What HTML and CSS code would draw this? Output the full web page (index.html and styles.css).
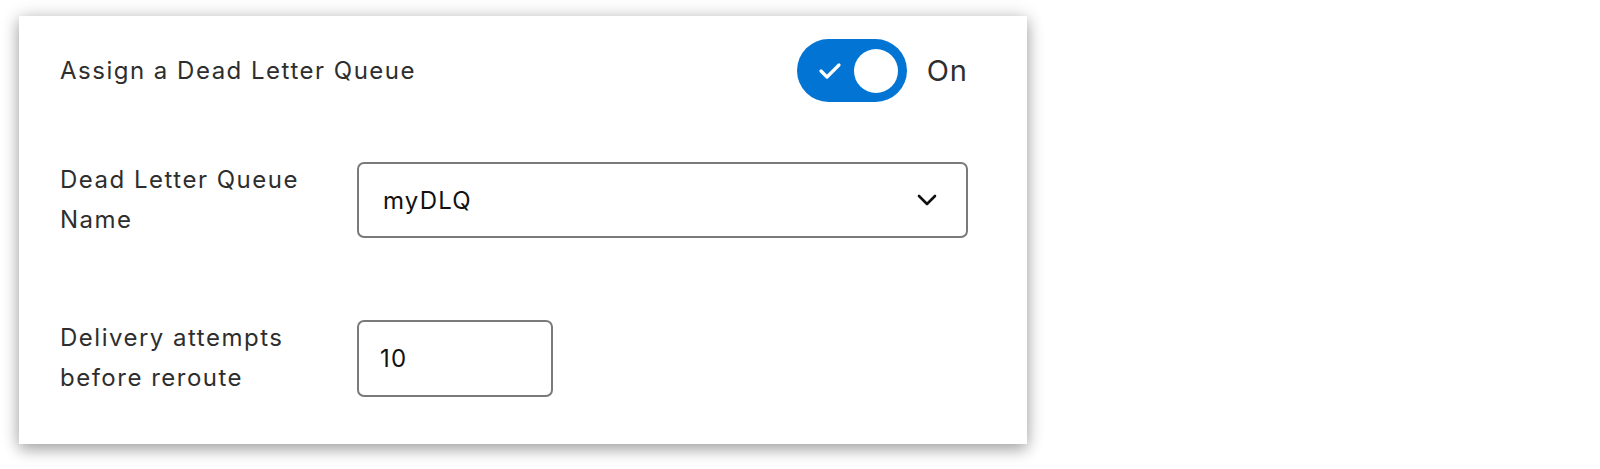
FILE: index.html
```html
<!DOCTYPE html>
<html>
<head>
<meta charset="utf-8">
<link rel="stylesheet" href="styles.css">
</head>
<body>
<div class="card">
  <div class="row row-title">
    <div class="title">Assign a Dead Letter Queue</div>
    <div class="switch-group">
      <div class="switch">
        <svg class="check" width="24" height="18" viewBox="0 0 24 18"><polyline points="3,9 9,15 21,3" fill="none" stroke="#fff" stroke-width="3.2" stroke-linecap="round" stroke-linejoin="round"/></svg>
        <div class="knob"></div>
      </div>
      <span class="state">On</span>
    </div>
  </div>
  <div class="row row-select">
    <div class="label">Dead Letter Queue<br>Name</div>
    <div class="select">
      <span class="value">myDLQ</span>
      <svg class="chev" width="20" height="12" viewBox="0 0 20 12"><polyline points="2,2 10,10 18,2" fill="none" stroke="#111" stroke-width="2.6" stroke-linecap="round" stroke-linejoin="round"/></svg>
    </div>
  </div>
  <div class="row row-number">
    <div class="label">Delivery attempts<br>before reroute</div>
    <div class="number"><span class="value">10</span></div>
  </div>
</div>
</body>
</html>
```
FILE: styles.css
```css
html, body {
  margin: 0;
  padding: 0;
  background: #ffffff;
}
body {
  font-family: Inter, "Noto Sans", "Liberation Sans", sans-serif;
  color: #2e2e2e;
  min-height: 469px;
  padding-top: 16px;
  box-sizing: border-box;
}
.card {
  margin: 0 0 0 19px;
  width: 1008px;
  height: 428px;
  box-sizing: border-box;
  padding: 23px 59px 0 41px;
  background: #ffffff;
  box-shadow: 0 6px 14px rgba(0, 0, 0, 0.28), 0 0 18px rgba(0, 0, 0, 0.16);
}
.row {
  display: flex;
  align-items: center;
}
.row-title {
  justify-content: space-between;
  height: 63px;
}
.title {
  font-size: 24px;
  letter-spacing: 1.5px;
}
.switch-group {
  display: flex;
  align-items: center;
  gap: 20px;
}
.switch {
  width: 110px;
  height: 63px;
  border-radius: 32px;
  background: #0174d4;
  display: flex;
  align-items: center;
  justify-content: flex-end;
  padding-right: 9px;
  box-sizing: border-box;
  gap: 12px;
}
.check {
  display: block;
}
.knob {
  width: 44px;
  height: 44px;
  border-radius: 50%;
  background: #ffffff;
}
.state {
  font-size: 29px;
  letter-spacing: 1px;
  color: #2e2e2e;
}
.row-select {
  margin-top: 58px;
  height: 80px;
}
.row-number {
  margin-top: 78px;
  height: 80px;
}
.label {
  width: 297px;
  flex: none;
  font-size: 24px;
  letter-spacing: 1.5px;
  line-height: 40px;
}
.select {
  width: 612px;
  height: 76px;
  box-sizing: border-box;
  border: 2px solid #7a7a7a;
  border-radius: 7px;
  display: flex;
  align-items: center;
  justify-content: space-between;
  padding: 0 29px 0 24px;
}
.value {
  font-size: 24px;
  letter-spacing: 1.2px;
  color: #111;
}
.chev {
  display: block;
}
.number {
  width: 196px;
  height: 77px;
  box-sizing: border-box;
  border: 2px solid #7a7a7a;
  border-radius: 7px;
  display: flex;
  align-items: center;
  padding-left: 21px;
}
```
